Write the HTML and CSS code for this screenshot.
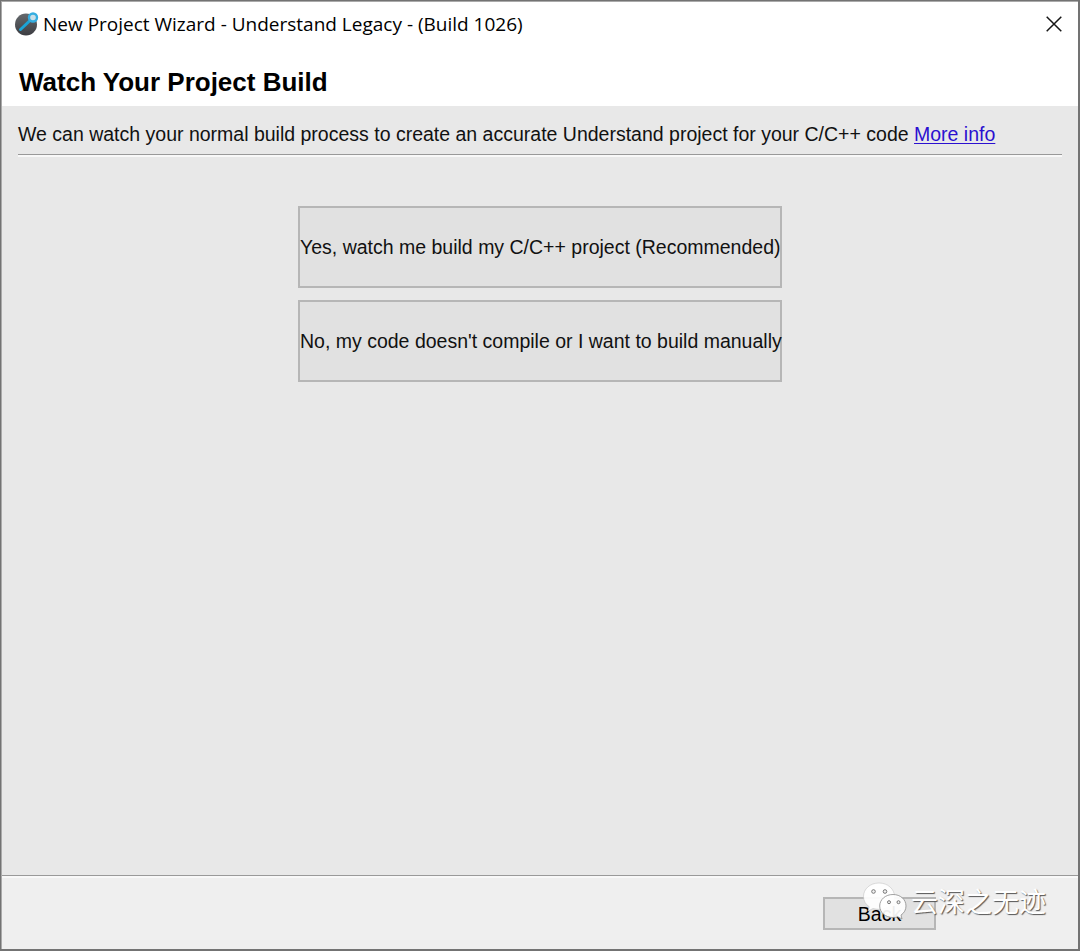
FILE: index.html
```html
<!DOCTYPE html>
<html lang="en">
<head>
<meta charset="utf-8">
<title>New Project Wizard</title>
<link rel="stylesheet" href="styles.css">
</head>
<body>
<div class="window">
  <header class="head">
    <div class="titlebar">
      <svg class="app-icon" width="26" height="26" viewBox="0 0 26 26">
        <defs><linearGradient id="disc" x1="0" y1="0" x2="0" y2="1"><stop offset="0" stop-color="#65696d"/><stop offset="1" stop-color="#3c3d42"/></linearGradient></defs>
        <circle cx="12" cy="13.5" r="11" fill="url(#disc)"/>
        <path d="M6.5 18.5 L16 9.5" stroke="#1ba3d6" stroke-width="3" stroke-linecap="round"/>
        <circle cx="19" cy="6.5" r="4" fill="#c9dfe8" stroke="#35ade0" stroke-width="2.4"/>
      </svg>
      <span class="title">New Project Wizard - Understand Legacy - (Build 1026)</span>
      <svg class="close" width="16" height="16" viewBox="0 0 16 16"><path d="M.7.7 15.3 15.3M15.3.7 .7 15.3" stroke="#161616" stroke-width="1.5"/></svg>
    </div>
    <h1 class="heading"><span>Watch Your Project Build</span></h1>
  </header>
  <main class="content">
    <p class="intro"><span class="intro-text">We can watch your normal build process to create an accurate Understand project for your C/C++ code</span> <a class="link" href="#">More info</a></p>
    <div class="rule"></div>
    <div class="choices">
      <button class="choice"><span class="yes">Yes, watch me build my C/C++ project (Recommended)</span></button>
      <button class="choice"><span class="no">No, my code doesn't compile or I want to build manually</span></button>
    </div>
  </main>
  <footer class="foot">
    <button class="back">Back</button>
    <div class="watermark">
      <svg class="chat" width="46" height="40" viewBox="0 0 46 40">
        <g stroke="#8b8b8b" stroke-width=".8">
          <path d="M17 2C8 2 1.500 8 1.500 15.500c0 4.500 2.300 7.900 5.700 10.200L6 30l5-2.500c2 .6 4 .8 6 .8 9 0 15.500-5.600 15.500-12.800S26 2 17 2z" fill="#fff" fill-opacity=".93" stroke="#bbb" stroke-width=".5"/>
          <path d="M31 13.500c-7.500 0-13.300 5-13.300 11.500S23.500 36.500 31 36.500c1.700 0 3.300-.2 4.800-.7l4.200 2.200-1-3.900c3.200-2.200 5-5.300 5-9.100 0-6.500-5.500-11.500-13-11.500z" fill="#fff" fill-opacity=".93"/>
        </g>
        <g fill="#f2f2f2" stroke="#777" stroke-width="1"><circle cx="11.500" cy="10.500" r="1.800"/><circle cx="23" cy="10.500" r="1.800"/><circle cx="27" cy="21.200" r="1.500"/><circle cx="36.500" cy="21.200" r="1.500"/></g>
      </svg>
      <span class="wm-text">云深之无迹</span>
    </div>
  </footer>
</div>
</body>
</html>
```
FILE: styles.css
```css
* { box-sizing: border-box; }
body { margin: 0; font-family: "Liberation Sans", Arial, sans-serif; color: #000; }
.window {
  width: 1080px; height: 951px; display: flex; flex-direction: column;
  border: solid #737373; border-width: 1px 2px 2px 1px; background: #e8e8e8;
  box-shadow: inset 1px 1px #aaa; white-space: nowrap;
}
.head { height: 104px; margin: 1px 0 0 1px; background: #fff; }
.titlebar { height: 44px; display: flex; align-items: center; padding: 0 16px 0 12px; }
.app-icon { margin-right: 3px; }
.title { font: 19px/26px "Open Sans", sans-serif; flex: 1; }
.close { display: block; }
.heading { margin: 20px 0 0 17px; font-size: 26px; line-height: 32px; font-weight: bold; }
.content { flex: 1; padding: 15px 16px 0 17px; }
.intro { margin: 0; font-size: 19.5px; line-height: 26px; height: 33px; color: #111; }
.link { color: #2b10d0; text-underline-offset: 2px; text-decoration-thickness: 1px; }
.rule { height: 3px; border-top: 1px solid #999; border-bottom: 2px solid #f8f8f8; }
.choices { display: flex; flex-direction: column; align-items: center; gap: 12px; margin-top: 49px; }
.choice {
  width: 484px; height: 82px; padding: 0; border: 2px solid #b6b6b6; background: #e1e1e1;
  font: 19.5px/26px "Liberation Sans", Arial, sans-serif; color: #111;
}
.foot {
  position: relative; height: 74px; margin-left: 1px; background: #efefef;
  border-top: 1px solid #999; box-shadow: inset 0 2px #f8f8f8; padding: 21px 0 0 821px;
}
.back {
  width: 113px; height: 33px; padding: 0; border: 2px solid #b6b6b6; background: #e1e1e1;
  font: 19.5px/26px "Liberation Sans", Arial, sans-serif; color: #000;
}
.watermark { position: absolute; left: 860px; top: 5px; display: flex; align-items: center; }
.wm-text {
  margin-left: 3px; font: 27px/40px "Noto Sans CJK SC", sans-serif; color: #fff;
  text-shadow: 1px 1px 1px #555;
}
```
